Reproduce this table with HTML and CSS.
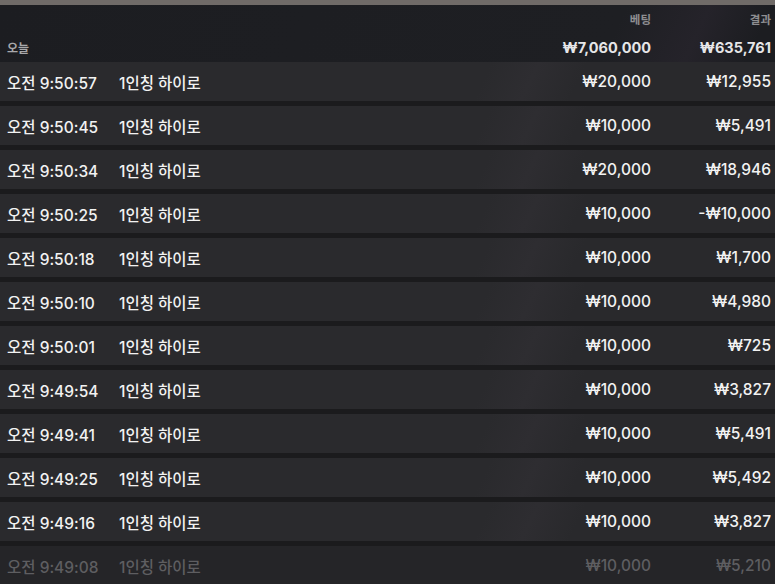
FILE: index.html
```html
<!DOCTYPE html>
<html>
<head>
	<title>베팅 기록</title>
	<link rel="stylesheet" href="styles.css">
</head>
<body>
	<div class="topbar"></div>

	<div class="history">
		<div class="head">
			<span class="c-time"></span>
			<span class="c-game"></span>
			<span class="c-bet">베팅</span>
			<span class="c-res">결과</span>
		</div>

		<div class="day">
			<span class="c-time">오늘</span>
			<span class="c-game"></span>
			<span class="c-bet">₩7,060,000</span>
			<span class="c-res">₩635,761</span>
		</div>

		<div class="rows">
			<div class="row"><span class="c-time">오전 9:50:57</span><span class="c-game">1인칭 하이로</span><span class="c-bet">₩20,000</span><span class="c-res">₩12,955</span></div>
			<div class="row"><span class="c-time">오전 9:50:45</span><span class="c-game">1인칭 하이로</span><span class="c-bet">₩10,000</span><span class="c-res">₩5,491</span></div>
			<div class="row"><span class="c-time">오전 9:50:34</span><span class="c-game">1인칭 하이로</span><span class="c-bet">₩20,000</span><span class="c-res">₩18,946</span></div>
			<div class="row"><span class="c-time">오전 9:50:25</span><span class="c-game">1인칭 하이로</span><span class="c-bet">₩10,000</span><span class="c-res">-₩10,000</span></div>
			<div class="row"><span class="c-time">오전 9:50:18</span><span class="c-game">1인칭 하이로</span><span class="c-bet">₩10,000</span><span class="c-res">₩1,700</span></div>
			<div class="row"><span class="c-time">오전 9:50:10</span><span class="c-game">1인칭 하이로</span><span class="c-bet">₩10,000</span><span class="c-res">₩4,980</span></div>
			<div class="row"><span class="c-time">오전 9:50:01</span><span class="c-game">1인칭 하이로</span><span class="c-bet">₩10,000</span><span class="c-res">₩725</span></div>
			<div class="row"><span class="c-time">오전 9:49:54</span><span class="c-game">1인칭 하이로</span><span class="c-bet">₩10,000</span><span class="c-res">₩3,827</span></div>
			<div class="row"><span class="c-time">오전 9:49:41</span><span class="c-game">1인칭 하이로</span><span class="c-bet">₩10,000</span><span class="c-res">₩5,491</span></div>
			<div class="row"><span class="c-time">오전 9:49:25</span><span class="c-game">1인칭 하이로</span><span class="c-bet">₩10,000</span><span class="c-res">₩5,492</span></div>
			<div class="row"><span class="c-time">오전 9:49:16</span><span class="c-game">1인칭 하이로</span><span class="c-bet">₩10,000</span><span class="c-res">₩3,827</span></div>
			<div class="row faded"><span class="c-time">오전 9:49:08</span><span class="c-game">1인칭 하이로</span><span class="c-bet">₩10,000</span><span class="c-res">₩5,210</span></div>
		</div>
	</div>
</body>
</html>
```

FILE: styles.css
```css
html, body {
	margin: 0;
	padding: 0;
	height: 584px;
	overflow: hidden;
}

body {
	background: #1d1e22;
	font-family: Inter, "Noto Sans CJK KR", sans-serif;
	color: #f2f2f2;
}

.topbar {
	height: 5px;
	background: #706b68;
}

.history {
	background: linear-gradient(115deg, #1c1d21 0%, #1e1f23 60%, #25232a 68%, #1c1d21 74%);
}

.head, .day, .row {
	display: grid;
	grid-template-columns: 112px 1fr 140px 120px;
	align-items: center;
	padding: 0 4px 0 7px;
}

.c-bet, .c-res {
	text-align: right;
}

.head {
	height: 27px;
	font-size: 11.5px;
	color: #8e8e91;
	font-weight: 600;
}

.day {
	height: 30px;
	font-size: 14.5px;
	font-weight: 700;
	color: #e6e6e8;
}

.day .c-time {
	font-size: 12px;
	color: #a8a8ab;
}

.rows {
	display: flex;
	flex-direction: column;
	gap: 5px;
	background: #1b1b1d;
}

.row {
	height: 39px;
	font-size: 15.5px;
	font-weight: 500;
	background: linear-gradient(115deg, #2a2a2d 0%, #2a2a2d 62%, #2e2d31 68%, #29292c 74%);
}

.faded {
	color: #5e5e61;
	background: #252528;
}
```
